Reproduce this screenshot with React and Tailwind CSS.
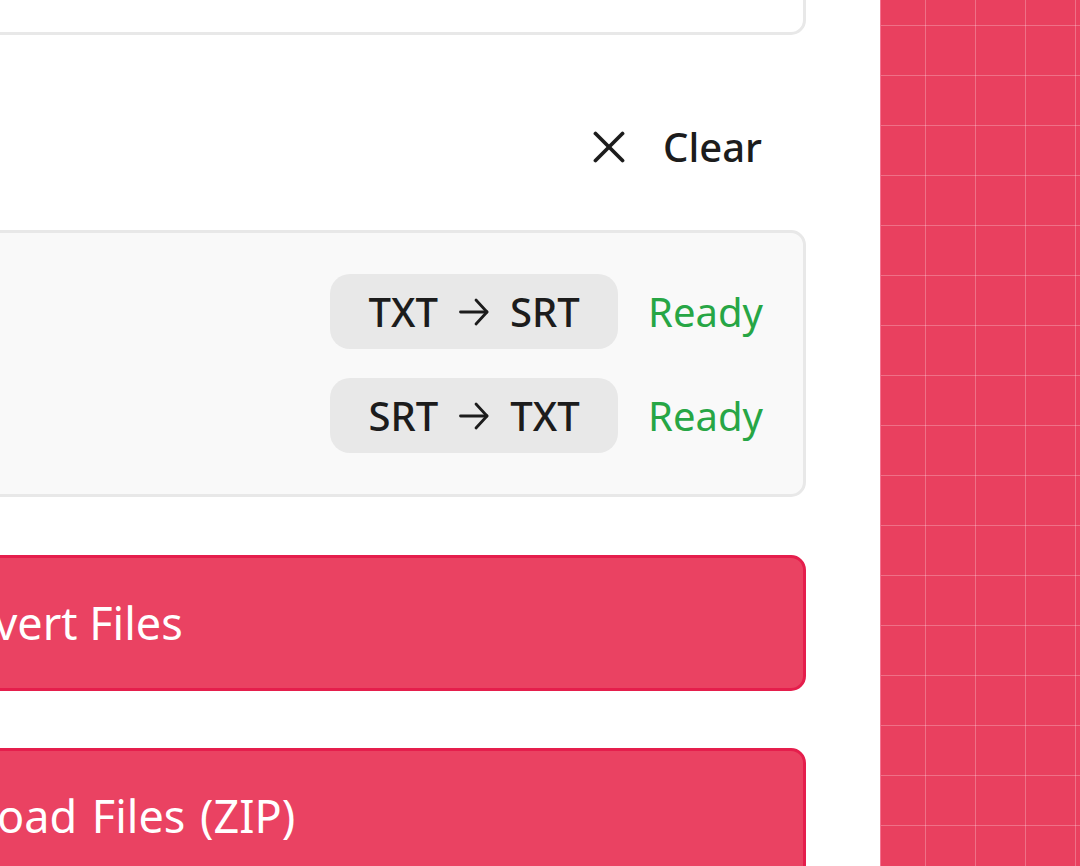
import React from 'react';

const conversions = [
  { from: 'TXT', to: 'SRT', status: 'Ready' },
  { from: 'SRT', to: 'TXT', status: 'Ready' },
];

const XIcon = () => (
  <svg width="32" height="32" viewBox="0 0 32 32" fill="none" stroke="currentColor" strokeWidth="3.8" strokeLinecap="round">
    <path d="M2.5 2.5 29.5 29.5" />
    <path d="M29.5 2.5 2.5 29.5" />
  </svg>
);

const Arrow = () => (
  <svg width="30" height="28" viewBox="0 0 30 28" fill="none" stroke="currentColor" strokeWidth="2.8" strokeLinecap="round" strokeLinejoin="round">
    <path d="M1.5 14H28" />
    <path d="M17 2 28 14 17 26" />
  </svg>
);

const App = () => {
  return (
    <div className="flex h-[866px] w-[1080px] overflow-hidden bg-white font-['Noto_Sans',sans-serif]">
      {/* main column, scrolled so its left side is off screen */}
      <div className="flex min-w-0 flex-1 justify-end overflow-hidden">
        <div className="flex w-[1100px] shrink-0 flex-col pr-[74px]">
          <div className="-mt-[65px] h-[100px] shrink-0 rounded-[15px] border-[3px] border-[#e8e8e8] bg-white" />

          <div className="mt-[82px] flex h-[60px] shrink-0 items-center justify-end pr-[44px] text-[40px] font-medium text-[#1c1c1c]">
            <button className="flex items-center gap-[38px]">
              <XIcon />
              <span className="leading-none">Clear</span>
            </button>
          </div>

          <div className="mt-[53px] flex shrink-0 flex-col gap-[29px] rounded-[15px] border-[3px] border-[#e8e8e8] bg-[#f9f9f9] py-[41px] pr-[40px]">
            {conversions.map((c) => (
              <div key={c.from} className="flex items-center justify-end gap-[30px]">
                <span className="flex h-[75px] w-[288px] items-center justify-center gap-[21px] rounded-[20px] bg-[#e8e8e8] text-[40px] font-medium text-[#1c1c1c]">
                  <span>{c.from}</span>
                  <Arrow />
                  <span>{c.to}</span>
                </span>
                <span className="text-[40px] text-[#27a645]">{c.status}</span>
              </div>
            ))}
          </div>

          <button className="mt-[58px] flex h-[136px] shrink-0 items-center rounded-[15px] border-[3px] border-[#e51e4c] bg-[#ea4262] pl-[128px] text-[45px] text-white">
            Convert Files
          </button>
          <button className="mt-[57px] flex h-[136px] shrink-0 items-center rounded-[15px] border-[3px] border-[#e51e4c] bg-[#ea4262] pl-[80px] text-[45px] text-white [word-spacing:3px]">
            Download Files (ZIP)
          </button>
        </div>
      </div>

      {/* decorative grid panel */}
      <div className="w-[200px] shrink-0 border-l border-[#f27390] bg-[#e9405f] bg-[linear-gradient(to_right,rgba(255,255,255,0.25)_1px,transparent_1px),linear-gradient(to_bottom,rgba(255,255,255,0.25)_1px,transparent_1px)] bg-[size:50px_50px] bg-[position:44px_25px]" />
    </div>
  );
};

export default App;
